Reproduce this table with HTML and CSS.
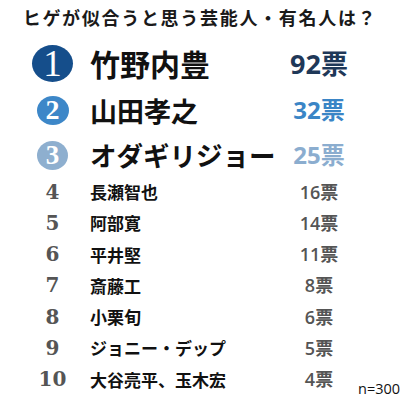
FILE: index.html
```html
<!DOCTYPE html>
<html lang="ja">
<head>
    <meta charset="UTF-8">
    <meta name="viewport" content="width=device-width, initial-scale=1.0">
    <title>ヒゲが似合うと思う芸能人・有名人</title>
    <link rel="stylesheet" href="styles.css">
</head>
<body>
    <div class="chart">
        <h1 class="title">ヒゲが似合うと思う芸能人・有名人は？</h1>
        <div class="ranking">
            <div class="row row-1">
                <div class="rank"><span class="badge badge-1">1</span></div>
                <div class="name">竹野内豊</div>
                <div class="votes">92票</div>
            </div>
            <div class="row row-2">
                <div class="rank"><span class="badge badge-2">2</span></div>
                <div class="name">山田孝之</div>
                <div class="votes">32票</div>
            </div>
            <div class="row row-3">
                <div class="rank"><span class="badge badge-3">3</span></div>
                <div class="name">オダギリジョー</div>
                <div class="votes">25票</div>
            </div>
            <div class="row">
                <div class="rank">4</div>
                <div class="name">長瀬智也</div>
                <div class="votes">16票</div>
            </div>
            <div class="row">
                <div class="rank">5</div>
                <div class="name">阿部寛</div>
                <div class="votes">14票</div>
            </div>
            <div class="row">
                <div class="rank">6</div>
                <div class="name">平井堅</div>
                <div class="votes">11票</div>
            </div>
            <div class="row">
                <div class="rank">7</div>
                <div class="name">斎藤工</div>
                <div class="votes">8票</div>
            </div>
            <div class="row">
                <div class="rank">8</div>
                <div class="name">小栗旬</div>
                <div class="votes">6票</div>
            </div>
            <div class="row">
                <div class="rank">9</div>
                <div class="name">ジョニー・デップ</div>
                <div class="votes">5票</div>
            </div>
            <div class="row">
                <div class="rank">10</div>
                <div class="name">大谷亮平、玉木宏</div>
                <div class="votes">4票</div>
                <div class="note">n=300</div>
            </div>
        </div>
    </div>
</body>
</html>
```

FILE: styles.css
```css
body {
    margin: 0;
    background-color: #fff;
    font-family: "Noto Sans CJK JP", sans-serif;
    color: #111;
}
.chart {
    width: 400px;
    height: 400px;
    overflow: hidden;
}
.title {
    margin: 0;
    padding-top: 5px;
    height: 35px;
    font-size: 18px;
    line-height: 24px;
    font-weight: 700;
    letter-spacing: 1.7px;
    text-align: center;
    color: #1a1a1a;
}
.row {
    display: grid;
    grid-template-columns: 41px 207px 78px 1fr;
    align-items: center;
    padding-left: 32px;
    height: 31.25px;
}
.row-1 {
    height: 46px;
}
.row-2 {
    height: 48px;
}
.row-3 {
    height: 42px;
}
.rank {
    display: flex;
    justify-content: center;
    align-items: center;
    font-family: "DejaVu Serif", serif;
    font-weight: 700;
    font-size: 20px;
    line-height: 1;
    color: #555;
}
.badge {
    display: flex;
    justify-content: center;
    align-items: center;
    border-radius: 50%;
    color: #fff;
    font-family: "Liberation Serif", serif;
}
.badge-1 {
    width: 41px;
    height: 37px;
    background-color: #154e8b;
    font-size: 37px;
    font-weight: 400;
}
.badge-2 {
    width: 32px;
    height: 29px;
    background-color: #3d87c8;
    font-size: 28px;
}
.badge-3 {
    width: 31px;
    height: 29px;
    background-color: #8eafcf;
    font-size: 27px;
}
.name {
    padding-left: 17px;
    font-size: 17px;
    font-weight: 700;
    line-height: 1;
    white-space: nowrap;
}
.row-1 .name {
    font-size: 30px;
}
.row-2 .name {
    font-size: 27px;
}
.row-3 .name {
    font-size: 26.5px;
}
.votes {
    text-align: center;
    font-family: "Open Sans", "Noto Sans CJK JP", sans-serif;
    font-size: 18px;
    font-weight: 600;
    line-height: 1;
    color: #555;
    white-space: nowrap;
}
.row-1 .votes {
    font-size: 27px;
    font-weight: 700;
    color: #1f3858;
}
.row-2 .votes {
    font-size: 24px;
    font-weight: 700;
    color: #3a85c6;
}
.row-3 .votes {
    font-size: 24px;
    font-weight: 700;
    color: #8badcf;
}
.note {
    align-self: end;
    justify-self: end;
    margin-bottom: -2px;
    font-family: "Open Sans", sans-serif;
    font-size: 14.5px;
    line-height: 1;
    color: #111;
}
```
